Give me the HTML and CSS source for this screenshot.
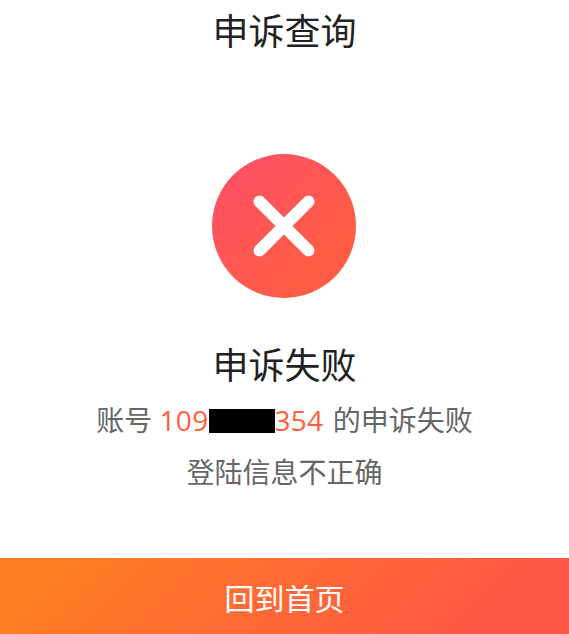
FILE: index.html
```html
<!DOCTYPE html>
<html lang="zh-CN">

<head>
    <meta charset="UTF-8">
    <title>申诉查询</title>
    <link rel="stylesheet" href="styles.css">
</head>

<body>
    <div class="page">
        <h1 class="page-title">申诉查询</h1>
        <div class="result-icon">
            <svg width="62" height="62" viewBox="0 0 62 62">
                <path d="M6.5 6.5 L55.5 55.5 M55.5 6.5 L6.5 55.5" stroke="#fff" stroke-width="12" stroke-linecap="round" fill="none" />
            </svg>
        </div>
        <h2 class="result-title">申诉失败</h2>
        <p class="result-line">账号 <span class="account">109<span class="mask"></span>354</span> 的申诉失败</p>
        <p class="result-line reason">登陆信息不正确</p>
        <div class="spacer"></div>
        <div class="home-button">回到首页</div>
    </div>
</body>

</html>
```
FILE: styles.css
```css
* {
    box-sizing: border-box;
}

html,
body {
    margin: 0;
    padding: 0;
    height: 100%;
    overflow: hidden;
}

body {
    font-family: "Open Sans", "Noto Sans CJK SC", sans-serif;
    background-color: #fff;
}

.page {
    height: 634px;
    display: flex;
    flex-direction: column;
    align-items: center;
}

.page-title {
    margin: 8px 0 0;
    font-size: 36px;
    line-height: 48px;
    font-weight: 400;
    color: #222;
}

.result-icon {
    width: 144px;
    height: 144px;
    margin: 98px 1px 0 0;
    border-radius: 50%;
    background: linear-gradient(135deg, #ff4e68, #ff5c46 72%);
    display: flex;
    align-items: center;
    justify-content: center;
}

.result-title {
    margin: 44px 0 0;
    font-size: 36px;
    line-height: 48px;
    font-weight: 400;
    color: #222;
}

.result-line {
    margin: 10px 0 0;
    font-size: 28px;
    line-height: 40px;
    color: #666;
}

.reason {
    margin-top: 12px;
}

.account {
    color: #ff5f3a;
    letter-spacing: 0.3px;
    margin-right: 2px;
}

.mask {
    display: inline-block;
    width: 66px;
    height: 24px;
    background-color: #000;
    vertical-align: -2px;
}

.spacer {
    flex: 1;
}

.home-button {
    width: 100%;
    height: 76px;
    background: linear-gradient(135deg, #ff7e22 8%, #ff5645 87%);
    color: #fff;
    font-size: 30px;
    line-height: 82px;
    text-align: center;
}
```
